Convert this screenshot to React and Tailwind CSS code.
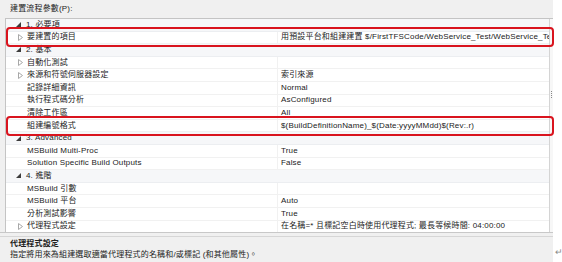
import React from "react";

const rows = [
  { t: "cat", n: "1. 必要項" },
  { t: "item", exp: true, n: "要建置的項目", v: "用預設平台和組建建置 $/FirstTFSCode/WebService_Test/WebService_Test.sln" },
  { t: "cat", n: "2. 基本" },
  { t: "item", exp: true, n: "自動化測試", v: "" },
  { t: "item", exp: true, n: "來源和符號伺服器設定", v: "索引來源" },
  { t: "item", n: "記錄詳細資訊", v: "Normal" },
  { t: "item", n: "執行程式碼分析", v: "AsConfigured" },
  { t: "item", n: "清除工作區", v: "All" },
  { t: "item", n: "組建編號格式", v: "$(BuildDefinitionName)_$(Date:yyyyMMdd)$(Rev:.r)" },
  { t: "cat", n: "3. Advanced" },
  { t: "item", n: "MSBuild Multi-Proc", v: "True" },
  { t: "item", n: "Solution Specific Build Outputs", v: "False" },
  { t: "cat", n: "4. 進階" },
  { t: "item", n: "MSBuild 引數", v: "" },
  { t: "item", n: "MSBuild 平台", v: "Auto" },
  { t: "item", n: "分析測試影響", v: "True" },
  { t: "item", exp: true, n: "代理程式設定", v: "在名稱=* 且標記空白時使用代理程式; 最長等候時間: 04:00:00" },
];

function Collapsed() {
  return (
    <svg width="5" height="7" viewBox="0 0 5 7" className="shrink-0">
      <path d="M0.5 0.5 L4.5 3.5 L0.5 6.5 Z" fill="none" stroke="#a8a8a8" strokeWidth="1" />
    </svg>
  );
}

function Expanded() {
  return (
    <svg width="5" height="5" viewBox="0 0 5 5" className="shrink-0">
      <path d="M5 0 L5 5 L0 5 Z" fill="#3c3c3c" />
    </svg>
  );
}

export default function App() {
  return (
    <div
      className="relative w-[562px] h-[262px] bg-white overflow-hidden flex text-[8px] text-[#222] tracking-[0.17px]"
      style={{ fontFamily: '"Liberation Sans", "Noto Sans CJK TC", sans-serif' }}
    >
      <div className="w-[553px] h-full bg-[#f0f0f0] flex flex-col shrink-0">
        <div className="h-[18px] pl-[10px] flex items-center leading-none">建置流程參數(P):</div>
        <div className="ml-[5px] h-[214px] bg-white border-t border-l border-[#c4c4c4] flex overflow-hidden">
          <div className="flex-1 flex flex-col min-w-0">
            {rows.map((r, i) =>
              r.t === "cat" ? (
                <div
                  key={i}
                  className="h-[12.6px] shrink-0 flex items-center bg-[#f6f7f9] border-b border-[#eceef1] pl-[10px] gap-[5px] leading-none"
                >
                  <Expanded />
                  <span className="whitespace-nowrap">{r.n}</span>
                </div>
              ) : (
                <div key={i} className="h-[12.6px] shrink-0 flex border-b border-[#f1f1f1] leading-none">
                  <div className="w-[272px] shrink-0 flex items-center border-r border-[#f1f1f1]">
                    <div className="w-[21px] flex justify-end pr-[4px]">{r.exp ? <Collapsed /> : null}</div>
                    <span className="whitespace-nowrap">{r.n}</span>
                  </div>
                  <div className="flex-1 min-w-0 flex items-center pl-[3px] overflow-hidden">
                    <span className="whitespace-nowrap">{r.v}</span>
                  </div>
                </div>
              )
            )}
          </div>
          <div className="w-[4px] shrink-0 border-l border-[#d4d4d4] bg-[#f7f7f7] flex flex-col items-center">
            <div className="mt-[72px] w-[1px] h-[7px] border-l border-dotted border-[#888]" />
          </div>
        </div>
        <div className="h-[4px] border-t border-[#c8c8c8]" />
        <div className="flex-1 border-t border-[#d6d6d6] pl-[10px] pt-[1px] flex flex-col">
          <div className="leading-[11px] font-bold whitespace-nowrap">代理程式設定</div>
          <div className="leading-[11px] whitespace-nowrap">指定將用來為組建選取適當代理程式的名稱和/或標記 (和其他屬性)。</div>
        </div>
      </div>
      <div className="flex-1 flex flex-col justify-end pb-[5px] pl-[2px] text-[9px] text-[#8a8a8a] leading-none">
        ↵
      </div>

      <div className="absolute left-[6px] top-[27px] w-[548px] h-[20px] border-2 border-[#d9141e] rounded-[4px] pointer-events-none" />
      <div className="absolute left-[6px] top-[116px] w-[548px] h-[20px] border-2 border-[#d9141e] rounded-[4px] pointer-events-none" />
    </div>
  );
}
